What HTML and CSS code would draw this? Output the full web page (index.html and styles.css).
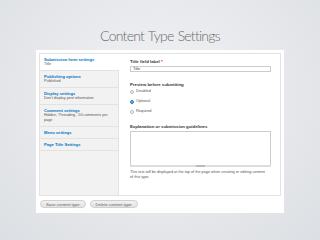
FILE: index.html
```html
<!DOCTYPE html>
<html lang="en">
<head>
  <meta charset="UTF-8" />
  <title>Content Type Settings</title>
  <link rel="stylesheet" href="styles.css">
</head>
<body>
  <h1 class="slide-title">Content Type Settings</h1>

  <div class="panel">
    <div class="tabs-box">
      <ul class="vtabs">
        <li class="vtab selected">
          <a>Submission form settings</a>
          <span>Title</span>
        </li>
        <li class="vtab">
          <a>Publishing options</a>
          <span>Published</span>
        </li>
        <li class="vtab">
          <a>Display settings</a>
          <span>Don't display post information</span>
        </li>
        <li class="vtab">
          <a>Comment settings</a>
          <span>Hidden, Threading , 50 comments per page</span>
        </li>
        <li class="vtab">
          <a>Menu settings</a>
        </li>
        <li class="vtab">
          <a>Page Title Settings</a>
        </li>
      </ul>

      <div class="pane">
        <div class="field">
          <label>Title field label <em>*</em></label>
          <div class="text-input">Title</div>
        </div>

        <div class="field">
          <label>Preview before submitting</label>
          <div class="radios">
            <div class="radio"><i></i>Disabled</div>
            <div class="radio"><i class="on"></i>Optional</div>
            <div class="radio"><i></i>Required</div>
          </div>
        </div>

        <div class="field">
          <label>Explanation or submission guidelines</label>
          <div class="textarea"></div>
          <div class="grippie"><b></b></div>
          <p class="help">This text will be displayed at the top of the page when creating or editing content of this type.</p>
        </div>
      </div>
    </div>

    <div class="actions">
      <button>Save content type</button>
      <button>Delete content type</button>
    </div>
  </div>
</body>
</html>
```

FILE: styles.css
```css
* {
  margin: 0;
  padding: 0;
  box-sizing: border-box;
}

html, body {
  height: 100%;
}

body {
  background: radial-gradient(ellipse at 50% 40%, #f1f2f4 0%, #e6e8eb 55%, #dcdfe3 100%);
  font-family: "Liberation Sans", Arial, sans-serif;
  color: #444;
  overflow: hidden;
}

.slide-title {
  font-family: Lato, "Open Sans", sans-serif;
  font-weight: 300;
  font-size: 14px;
  letter-spacing: -0.75px;
  word-spacing: 1px;
  color: #6b6b6b;
  text-align: center;
  height: 50px;
  padding-top: 27px;
}

.panel {
  background: #fff;
  margin: 0 36px;
  padding: 3px 3px 4px;
  height: 163px;
}

.tabs-box {
  display: grid;
  grid-template-columns: 79px 1fr;
  border: 1px solid #e2e2e2;
  height: 143px;
}

.vtabs {
  list-style: none;
  background: #f2f2f2;
  border-right: 1px solid #e2e2e2;
}

.vtab {
  padding: 3px 4px;
  border-bottom: 1px solid #e2e2e2;
  font-size: 3.8px;
  line-height: 5px;
}

.vtab.selected {
  background: #fff;
  margin-right: -1px;
}

.vtab a {
  display: block;
  color: #0074bd;
  font-weight: bold;
  font-size: 4.1px;
}

.vtab span {
  display: block;
  color: #555;
}

.pane {
  padding: 5px 9px 0 11px;
  font-size: 3.8px;
  line-height: 5px;
}

.field {
  margin-bottom: 10px;
}

.field label {
  display: block;
  font-weight: bold;
  font-size: 4.3px;
  color: #333;
  margin-bottom: 2px;
}

.field em {
  color: #e00;
  font-style: normal;
}

.text-input {
  border: 1px solid #ccc;
  height: 6px;
  line-height: 4px;
  padding-left: 2px;
  color: #333;
}

.radios {
  display: flex;
  flex-direction: column;
  gap: 5px;
}

.radio {
  display: flex;
  align-items: center;
  gap: 2px;
  color: #555;
}

.radio i {
  width: 4px;
  height: 4px;
  border-radius: 50%;
  border: 0.5px solid #bbb;
  background: #f4f4f4;
}

.radio i.on {
  background: #2a7fd0;
  border-color: #2a7fd0;
  box-shadow: inset 0 0 0 0.8px #8fc0ee;
}

.textarea {
  border: 1px solid #ccc;
  border-bottom: none;
  height: 34px;
}

.grippie {
  height: 2px;
  background: #eee;
  border: 0.5px solid #ddd;
  display: flex;
  justify-content: center;
  align-items: center;
  margin-bottom: 3px;
}

.grippie b {
  width: 9px;
  height: 1px;
  border-top: 0.5px solid #bbb;
  border-bottom: 0.5px solid #bbb;
}

.help {
  color: #555;
  padding-right: 2px;
}

.actions {
  display: flex;
  gap: 4px;
  padding: 4px 0 0 1px;
}

.actions button {
  font-family: "Liberation Sans", Arial, sans-serif;
  font-size: 4.2px;
  color: #666;
  background: linear-gradient(#f2f2f2, #e2e2e2);
  border: 0.5px solid #d0d0d0;
  border-radius: 5px;
  height: 8px;
  padding: 0 5px;
}
```
